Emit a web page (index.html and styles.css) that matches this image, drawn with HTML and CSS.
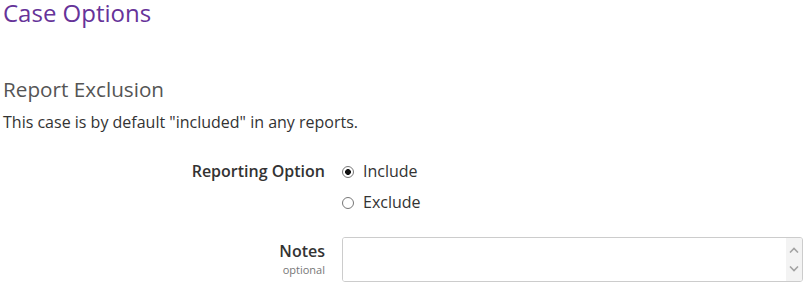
FILE: index.html
```html
<!DOCTYPE html>
<html>
<head>
<meta charset="utf-8">
<link rel="stylesheet" href="styles.css">
</head>
<body>
<h1 class="title">Case Options</h1>
<h2 class="section">Report Exclusion</h2>
<p class="desc">This case is by default "included" in any reports.</p>
<div class="form">
  <div class="row">
    <div class="label"><span class="lbl">Reporting Option</span></div>
    <div class="field radios">
      <label class="radio"><input type="radio" name="r" checked><span>Include</span></label>
      <label class="radio"><input type="radio" name="r"><span>Exclude</span></label>
    </div>
  </div>
  <div class="row notes">
    <div class="label"><span class="lbl">Notes</span><span class="opt">optional</span></div>
    <div class="field">
      <div class="ta-box">
        <textarea class="ta"></textarea>
        <div class="sb">
          <svg width="10" height="6" viewBox="0 0 10 6"><path d="M1 5.5 L5 1.5 L9 5.5" fill="none" stroke="#a3a3a3" stroke-width="1.6"/></svg>
          <svg width="10" height="6" viewBox="0 0 10 6"><path d="M1 0.5 L5 4.5 L9 0.5" fill="none" stroke="#a3a3a3" stroke-width="1.6"/></svg>
        </div>
      </div>
    </div>
  </div>
</div>
</body>
</html>
```
FILE: styles.css
```css
html, body { margin: 0; padding: 0; background: #fff; }
body { font-family: "Open Sans", sans-serif; color: #333; padding: 0 3px; font-size: 16px; }
.title { font-size: 24px; font-weight: 400; color: #663399; margin: 0; line-height: 26px; }
.section { font-size: 20.7px; font-weight: 400; color: #555; margin: 49px 0 0; line-height: 28px; }
.desc { margin: 8px 0 0; line-height: 22px; }
.form { margin-top: 27px; }
.row { display: flex; gap: 17px; }
.label { width: 322px; text-align: right; display: flex; flex-direction: column; align-items: flex-end; }
.lbl { font-weight: 600; line-height: 22px; }
.opt { font-size: 11px; color: #777; line-height: 16px; }
.field { flex: 1; display: flex; flex-direction: column; margin-right: 6px; }
.radios { gap: 9px; }
.radio { display: flex; align-items: center; gap: 9px; line-height: 22px; }
.radio input { appearance: none; -webkit-appearance: none; margin: 1px 0 0; width: 12px; height: 12px; border: 1px solid #777; border-radius: 50%; box-sizing: border-box; background: #fff; }
.radio input:checked { background: radial-gradient(circle, #111 0 2.6px, #fff 3.2px); }
.notes { margin-top: 24px; }
.notes .label { padding-top: 3px; }
.ta-box { display: flex; height: 45px; box-sizing: border-box; border: 1px solid #ccc; border-radius: 3px; overflow: hidden; }
.ta { flex: 1; border: 0; margin: 0; padding: 2px; resize: none; outline: none; overflow: hidden; font-family: "Open Sans", sans-serif; font-size: 14px; }
.sb { width: 16px; background: #f3f3f3; display: flex; flex-direction: column; justify-content: space-between; align-items: center; padding: 9px 0 9px; box-sizing: border-box; }
.sb svg { display: block; }
```
